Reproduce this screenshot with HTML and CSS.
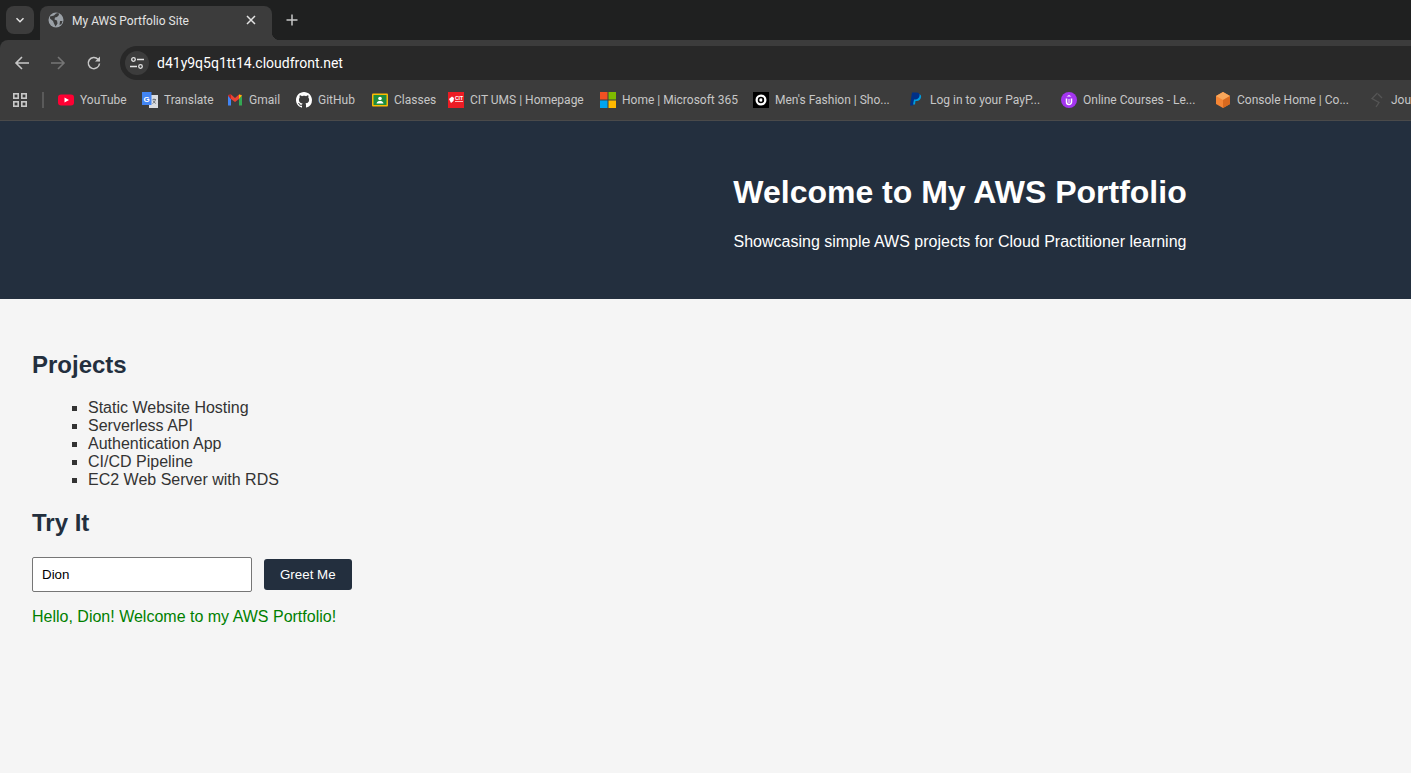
FILE: index.html
```html
<!DOCTYPE html>
<html lang="en">
<head>
    <meta charset="UTF-8">
    <meta name="viewport" content="width=device-width, initial-scale=1.0">
    <title>My AWS Portfolio Site</title>
    <link rel="stylesheet" href="styles.css">
</head>
<body>
    <!-- Browser chrome -->
    <div class="browser">
        <div class="tab-strip">
            <div class="tab-search">
                <svg width="12" height="12" viewBox="0 0 12 12"><path d="M2.5 4.2 6 7.7l3.5-3.5" fill="none" stroke="#e3e3e3" stroke-width="1.5"/></svg>
            </div>
            <div class="tab">
                <svg class="favicon" width="16" height="16" viewBox="0 0 16 16">
                    <circle cx="8" cy="8" r="7.5" fill="#9aa0a6"/>
                    <path d="M2 4.5 6 3.5 8 1.5 10.5 1l.5 2-2 2-2 .5-.5 2 2.500 1 .5 3-2 3-1.500-3-1-2.500L2 6.500zM12 9h2.500l-1 3-2 1z" fill="#3c3c3c"/>
                </svg>
                <span class="tab-title">My AWS Portfolio Site</span>
                <svg class="tab-close" width="10" height="10" viewBox="0 0 10 10"><path d="M1 1l8 8M9 1l-8 8" stroke="#e3e3e3" stroke-width="1.500"/></svg>
            </div>
            <svg class="new-tab" width="12" height="12" viewBox="0 0 12 12"><path d="M6 .5v11M.5 6h11" stroke="#c7c7c7" stroke-width="1.500"/></svg>
        </div>

        <div class="toolbar">
            <svg class="nav-icon" width="16" height="16" viewBox="0 0 16 16"><path d="M15 8H2.500M8 2 2 8l6 6" fill="none" stroke="#c7c7c7" stroke-width="1.600"/></svg>
            <svg class="nav-icon" width="16" height="16" viewBox="0 0 16 16"><path d="M1 8h12.500M8 2l6 6-6 6" fill="none" stroke="#757575" stroke-width="1.600"/></svg>
            <svg class="nav-icon" width="16" height="16" viewBox="0 0 16 16"><path d="M13.500 8.500A5.600 5.600 0 1 1 12 4.200L13.500 6" fill="none" stroke="#c7c7c7" stroke-width="1.500"/><path d="M14 1.500V6.500H9z" fill="#c7c7c7"/></svg>
            <div class="omnibox">
                <div class="site-info">
                    <svg width="16" height="16" viewBox="0 0 16 16" fill="none" stroke="#e3e3e3" stroke-width="1.300"><circle cx="4.500" cy="4.500" r="1.800"/><path d="M8 4.500h7M1 11.500h7"/><circle cx="11.500" cy="11.500" r="1.800"/></svg>
                </div>
                <span class="url">d41y9q5q1tt14.cloudfront.net</span>
            </div>
        </div>

        <div class="bookmarks">
            <svg class="apps" width="14" height="14" viewBox="0 0 14 14" fill="none" stroke="#c7c7c7" stroke-width="1.600"><rect x=".8" y=".8" width="4.400" height="4.400"/><rect x="8.800" y=".8" width="4.400" height="4.400"/><rect x=".8" y="8.800" width="4.400" height="4.400"/><rect x="8.800" y="8.800" width="4.400" height="4.400"/></svg>
            <span class="divider"></span>

            <div class="bookmark-list">
                <a class="bookmark">
                    <svg width="16" height="16" viewBox="0 0 16 16"><rect y="2.500" width="16" height="11" rx="3" fill="#ff0033"/><path d="M6.500 5.500v5L11 8z" fill="#fff"/></svg>
                    YouTube
                </a>
                <a class="bookmark">
                    <svg width="16" height="16" viewBox="0 0 16 16"><path d="M7 3h9v13H7z" fill="#dadce0"/><path d="M0 0h9.500v13H0z" fill="#4285f4"/><text x="4.700" y="9.500" font-size="8" font-weight="700" fill="#fff" text-anchor="middle" font-family="Liberation Sans, sans-serif">G</text><path d="M10.500 7.500h3.500M12 6.500v1M13.500 7.500c-.4 2-1.600 3.300-3 4M11 8.500c.5 1.300 1.500 2.300 2.800 3" fill="none" stroke="#5f6368" stroke-width=".8"/></svg>
                    Translate
                </a>
                <a class="bookmark">
                    <svg width="16" height="16" viewBox="0 0 16 16"><path d="M1 3.500v10h3V7z" fill="#4285f4"/><path d="M12 7v6.500h3v-10z" fill="#34a853"/><path d="M1 3 4 2.500 8 6l4-3.500L15 3 12 7 8 10 4 7z" fill="#ea4335"/><path d="M1 3.500 4 7V2.500z" fill="#c5221f"/><path d="M12 2.500V7l3-3.500z" fill="#fbbc04"/></svg>
                    Gmail
                </a>
                <a class="bookmark">
                    <svg width="16" height="16" viewBox="0 0 16 16"><path fill="#fff" d="M8 0C3.580 0 0 3.580 0 8c0 3.540 2.290 6.530 5.470 7.590.4.070.55-.17.55-.38 0-.19-.01-.82-.01-1.490-2.010.37-2.530-.49-2.690-.94-.09-.23-.48-.94-.82-1.130-.28-.15-.68-.52-.01-.53.63-.01 1.080.58 1.230.82.72 1.210 1.870.87 2.330.66.07-.52.28-.87.51-1.070-1.780-.2-3.640-.89-3.640-3.950 0-.87.31-1.590.82-2.150-.08-.2-.36-1.020.08-2.120 0 0 .67-.21 2.200.82.64-.18 1.320-.27 2-.27s1.360.09 2 .27c1.530-1.040 2.200-.82 2.200-.82.44 1.100.16 1.920.08 2.120.51.56.82 1.270.82 2.150 0 3.070-1.870 3.750-3.650 3.950.29.25.54.73.54 1.480 0 1.070-.01 1.930-.01 2.200 0 .21.15.46.55.38A8.010 8.010 0 0 0 16 8c0-4.420-3.580-8-8-8z"/></svg>
                    GitHub
                </a>
                <a class="bookmark">
                    <svg width="16" height="16" viewBox="0 0 16 16"><rect y="1.500" width="16" height="13" rx="1" fill="#fbbc04"/><rect x="1.500" y="3" width="13" height="10" fill="#1e8e3e"/><circle cx="8" cy="6.500" r="1.800" fill="#fff"/><path d="M4.500 11.500c.5-2 2-2.500 3.500-2.500s3 .5 3.500 2.500z" fill="#fff"/></svg>
                    Classes
                </a>
                <a class="bookmark">
                    <svg width="16" height="16" viewBox="0 0 16 16"><rect width="16" height="16" fill="#ed1c24"/><path d="M1 7l3-2.500 2 1.500-.5 3L3 11z" fill="#fff"/><text x="11" y="7.500" font-size="5" font-weight="700" fill="#fff" text-anchor="middle" font-family="Liberation Sans, sans-serif">CIT</text><path d="M7 9.500h8" stroke="#fbb" stroke-width="1"/></svg>
                    CIT UMS | Homepage
                </a>
                <a class="bookmark">
                    <svg width="16" height="16" viewBox="0 0 16 16"><path d="M0 0h7.500v7.500H0z" fill="#f25022"/><path d="M8.500 0H16v7.500H8.500z" fill="#7fba00"/><path d="M0 8.500h7.500V16H0z" fill="#00a4ef"/><path d="M8.500 8.500H16V16H8.500z" fill="#ffb900"/></svg>
                    Home | Microsoft 365
                </a>
                <a class="bookmark">
                    <svg width="16" height="16" viewBox="0 0 16 16"><rect width="16" height="16" fill="#000"/><circle cx="8" cy="8" r="5.500" fill="#fff"/><circle cx="8" cy="8" r="2.500" fill="none" stroke="#000" stroke-width="1.500"/><path d="M10 6v4" stroke="#000" stroke-width="1.200"/></svg>
                    Men's Fashion | Sho...
                </a>
                <a class="bookmark">
                    <svg width="16" height="16" viewBox="0 0 16 16"><path d="M5.500 2H10c2.500 0 3.500 1.500 3 3.500S10.800 9 9 9H7.500L7 12.500H4.500z" fill="#009cde"/><path d="M4 .5h4.500C11 .5 12 2 11.500 4S9.300 7.500 7.500 7.500H6L5.300 11 5 13.500H2z" fill="#003087"/></svg>
                    Log in to your PayP...
                </a>
                <a class="bookmark">
                    <svg width="16" height="16" viewBox="0 0 16 16"><circle cx="8" cy="8" r="8" fill="#a435f0"/><path d="M5.500 6.500V10a2.500 2.500 0 0 0 5 0V6.500" fill="none" stroke="#fff" stroke-width="1.500"/><path d="M8 3 5.500 4.500h5z" fill="#fff"/><path d="M8 7v4" stroke="#fff"/></svg>
                    Online Courses - Le...
                </a>
                <a class="bookmark">
                    <svg width="16" height="16" viewBox="0 0 16 16"><path d="M8 0l7 4v8l-7 4-7-4V4z" fill="#f58534"/><path d="M8 0l7 4-7 4-7-4z" fill="#f9a65a"/><path d="M8 8l7-4v8l-7 4z" fill="#d9691e"/></svg>
                    Console Home | Co...
                </a>
                <a class="bookmark">
                    <svg width="16" height="16" viewBox="0 0 16 16" fill="none" stroke="#555" stroke-width="1.300"><path d="M8.500 1 3 6.500l7 4-3 4.500M13 6 9 2"/></svg>
                    Jour
                </a>
            </div>
        </div>
    </div>

    <!-- Page -->
    <header class="site-header">
        <div class="site-title">
            <h1>Welcome to My AWS Portfolio</h1>
            <p>Showcasing simple AWS projects for Cloud Practitioner learning</p>
        </div>
    </header>

    <main class="content">
        <h2>Projects</h2>
        <ul class="project-list">
            <li>Static Website Hosting</li>
            <li>Serverless API</li>
            <li>Authentication App</li>
            <li>CI/CD Pipeline</li>
            <li>EC2 Web Server with RDS</li>
        </ul>

        <h2>Try It</h2>
        <div class="greet-form">
            <input type="text" class="name-input" value="Dion">
            <button class="greet-button">Greet Me</button>
        </div>
        <p class="greeting">Hello, Dion! Welcome to my AWS Portfolio!</p>
    </main>
</body>
</html>
```

FILE: styles.css
```css
html, body {
    margin: 0;
    height: 100%;
    overflow: hidden;
}
body {
    font-family: "Liberation Sans", Arial, sans-serif;
    background-color: #f5f5f5;
    color: #333333;
}

/* Browser chrome */
.browser {
    font-family: Roboto, "Noto Sans", sans-serif;
    height: 121px;
    background-color: #1f2020;
}
.tab-strip {
    height: 40px;
    display: flex;
    align-items: flex-end;
}
.tab-search {
    width: 28px;
    height: 28px;
    margin: 0 6px 6px 6px;
    background-color: #3c3c3c;
    border-radius: 8px;
    display: flex;
    align-items: center;
    justify-content: center;
}
.tab {
    position: relative;
    width: 232px;
    height: 34px;
    box-sizing: border-box;
    padding: 0 16px 6px 8px;
    background-color: #3c3c3c;
    border-radius: 8px 8px 0 0;
    display: flex;
    align-items: center;
    color: #e3e3e3;
    font-size: 12px;
}
/* rounded flare at the foot of the active tab */
.tab::after {
    content: "";
    position: absolute;
    right: -8px;
    bottom: 0;
    width: 8px;
    height: 8px;
    background: radial-gradient(circle at 100% 0, transparent 8px, #3c3c3c 8.5px);
}
.favicon {
    flex: none;
}
.tab-title {
    flex: 1;
    margin-left: 8px;
    padding-top: 1px;
    white-space: nowrap;
}
.new-tab {
    margin: 0 0 14px 14px;
}
.toolbar {
    height: 40px;
    box-sizing: border-box;
    padding: 6px 0 0 14px;
    background-color: #3c3c3c;
    border-radius: 8px 0 0 0;
    display: flex;
    align-items: flex-start;
}
.nav-icon {
    flex: none;
    margin: 9px 20px 0 0;
}
.omnibox {
    flex: 1;
    height: 34px;
    margin-left: -2px;
    padding-left: 5px;
    background-color: #282828;
    border-radius: 17px 0 0 17px;
    display: flex;
    align-items: center;
    color: #ffffff;
    font-size: 14px;
}
.site-info {
    width: 24px;
    height: 24px;
    border-radius: 50%;
    background-color: #3c3c3c;
    display: flex;
    align-items: center;
    justify-content: center;
}
.url {
    margin-left: 8px;
}
.bookmarks {
    height: 41px;
    box-sizing: border-box;
    padding: 0 0 1px 13px;
    background-color: #3c3c3c;
    border-bottom: 1px solid #4a4a4a;
    display: flex;
    align-items: center;
    white-space: nowrap;
    overflow: hidden;
}
.apps {
    flex: none;
}
.divider {
    flex: none;
    width: 2px;
    height: 16px;
    margin: 0 14px 0 15px;
    background-color: #5a5a5a;
}
.bookmark-list {
    flex: none;
    display: grid;
    grid-template-columns: 84px 85px 69px 76px 76px 152px 153px 155px 153px 154px 154px auto;
}
.bookmark {
    display: flex;
    align-items: center;
    gap: 6px;
    color: #c7c7c7;
    font-size: 12px;
}
.bookmark svg {
    flex: none;
}

/* Page header */
.site-header {
    padding: 32px 0 32px 733px;
    background-color: #232f3e;
    color: #ffffff;
}
.site-title {
    width: 454px;
    text-align: center;
    white-space: nowrap;
}
.site-title h1 {
    font-size: 32px;
    margin: 21.44px 0;
}
.site-title p {
    margin: 0 0 16px 0;
}

/* Page content */
.content {
    padding: 32px;
}
.content h2 {
    color: #232f3e;
    font-size: 24px;
    margin: 19.92px 0;
}
.project-list {
    margin: 16px;
    padding-left: 40px;
    list-style-type: square;
}
.greet-form {
    display: flex;
    align-items: center;
    gap: 12px;
}
.name-input {
    width: 220px;
    height: 35px;
    box-sizing: border-box;
    padding: 8px 9px;
    border: 1px solid #767676;
    border-radius: 2px;
    font-family: "Liberation Sans", Arial, sans-serif;
    font-size: 13.33px;
}
.greet-button {
    padding: 8px 16px;
    border: none;
    border-radius: 3px;
    background-color: #232f3e;
    color: #ffffff;
    font-family: "Liberation Sans", Arial, sans-serif;
    font-size: 13.33px;
}
.greeting {
    margin: 16px 0;
    color: #008000;
}
```
